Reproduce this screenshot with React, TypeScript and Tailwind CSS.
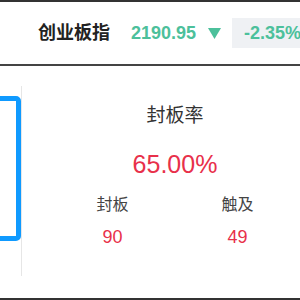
import React from "react";

export default function App() {
  const font = { fontFamily: '"Liberation Sans", Arial, "Noto Sans CJK SC", sans-serif' };
  return (
    <div className="w-[300px] h-[300px] bg-white overflow-hidden flex flex-col border-t-2 border-b-2 border-[#333333]" style={font}>
      <div className="h-[64px] shrink-0 flex items-center pl-[38px] border-b-2 border-[#444444]">
        <span className="text-[18px] font-bold text-[#222222] whitespace-nowrap">创业板指</span>
        <span className="ml-[21px] text-[18px] font-bold text-[#4cc09b] whitespace-nowrap">2190.95</span>
        <svg className="ml-[12px] shrink-0" width="13" height="11" viewBox="0 0 13 11">
          <polygon points="0,0 13,0 6.5,11" fill="#4cc09b" />
        </svg>
        <div className="ml-[11px] h-[30px] shrink-0 flex items-center pl-[12px] pr-[12px] bg-[#eff1f4]">
          <span className="text-[18px] font-bold text-[#4cc09b] whitespace-nowrap">-2.35%</span>
        </div>
      </div>
      <div className="flex-1 flex">
        <div className="w-[22px] shrink-0 mt-[20px] h-[190px] border-r border-[#e6e6e6] overflow-hidden flex justify-end">
          <div className="mt-[10px] w-[60px] h-[145px] shrink-0 border-[5px] border-[#0f9aff] rounded-[5px]" />
        </div>
        <div className="flex-1 pl-[28px] flex flex-col pt-[38px]">
          <div className="text-center text-[19px] leading-[24px] text-[#333333]">封板率</div>
          <div className="mt-[20px] text-center text-[25px] leading-[32px] text-[#e8304a]">65.00%</div>
          <div className="mt-[14px] grid grid-cols-2">
            <div className="flex flex-col items-center">
              <div className="text-[16px] leading-[22px] text-[#444444]">封板</div>
              <div className="mt-[9px] text-[18px] leading-[24px] text-[#e8304a]">90</div>
            </div>
            <div className="flex flex-col items-center">
              <div className="text-[16px] leading-[22px] text-[#444444]">触及</div>
              <div className="mt-[9px] text-[18px] leading-[24px] text-[#e8304a]">49</div>
            </div>
          </div>
        </div>
      </div>
    </div>
  );
}
